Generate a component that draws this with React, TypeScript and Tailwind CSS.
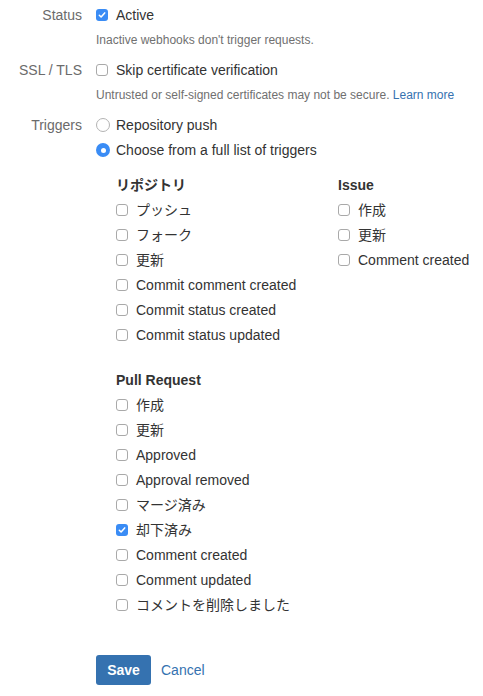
import React from "react";

type Item = { label: string; checked?: boolean };

const repoItems: Item[] = [
  { label: "プッシュ" },
  { label: "フォーク" },
  { label: "更新" },
  { label: "Commit comment created" },
  { label: "Commit status created" },
  { label: "Commit status updated" },
];

const issueItems: Item[] = [
  { label: "作成" },
  { label: "更新" },
  { label: "Comment created" },
];

const prItems: Item[] = [
  { label: "作成" },
  { label: "更新" },
  { label: "Approved" },
  { label: "Approval removed" },
  { label: "マージ済み" },
  { label: "却下済み", checked: true },
  { label: "Comment created" },
  { label: "Comment updated" },
  { label: "コメントを削除しました" },
];

const Checkbox: React.FC<{ checked?: boolean }> = ({ checked }) =>
  checked ? (
    <span className="flex h-3 w-3 shrink-0 items-center justify-center rounded-[3px] bg-[#3a8cf5]">
      <svg width="8" height="8" viewBox="0 0 8 8" fill="none">
        <path d="M1.3 4.2 3.1 6 6.7 1.9" stroke="white" strokeWidth="1.5" strokeLinecap="round" strokeLinejoin="round" />
      </svg>
    </span>
  ) : (
    <span className="h-3 w-3 shrink-0 rounded-[3px] border border-[#a9a9a9] bg-white" />
  );

const Radio: React.FC<{ checked?: boolean }> = ({ checked }) =>
  checked ? (
    <span className="flex h-[14px] w-[14px] shrink-0 items-center justify-center rounded-full bg-[#3a8cf5]">
      <span className="h-[5px] w-[5px] rounded-full bg-white" />
    </span>
  ) : (
    <span className="h-[14px] w-[14px] shrink-0 rounded-full border border-[#b3b3b3] bg-white" />
  );

const CheckRow: React.FC<Item> = ({ label, checked }) => (
  <div className="flex h-5 items-center">
    <Checkbox checked={checked} />
    <span className="ml-2 leading-5">{label}</span>
  </div>
);

const Group: React.FC<{ title: string; items: Item[]; className?: string }> = ({ title, items, className }) => (
  <div className={className}>
    <h3 className="h-5 font-bold leading-5">{title}</h3>
    <div className="mt-[5px] flex flex-col gap-[5px]">
      {items.map((it, i) => (
        <CheckRow key={i} {...it} />
      ))}
    </div>
  </div>
);

const Label: React.FC<{ children: React.ReactNode }> = ({ children }) => (
  <div className="h-5 w-[82px] shrink-0 text-right leading-5 text-[#6b6b6b]">{children}</div>
);

export default function App() {
  return (
    <div className="min-h-[696px] bg-white pt-[5px] font-['Liberation_Sans','Noto_Sans_CJK_JP',Arial,sans-serif] text-[14px] text-[#333]">
      {/* Status */}
      <div className="flex">
        <Label>Status</Label>
        <div className="ml-[14px]">
          <CheckRow label="Active" checked />
          <p className="mt-[5px] h-5 text-[12px] leading-5 text-[#707070]">
            Inactive webhooks don't trigger requests.
          </p>
        </div>
      </div>

      {/* SSL */}
      <div className="mt-[10px] flex">
        <Label>SSL / TLS</Label>
        <div className="ml-[14px]">
          <CheckRow label="Skip certificate verification" />
          <p className="mt-[5px] h-5 text-[12px] leading-5 text-[#707070]">
            Untrusted or self-signed certificates may not be secure.{" "}
            <a className="text-[#3572b0]">Learn more</a>
          </p>
        </div>
      </div>

      {/* Triggers */}
      <div className="mt-[10px] flex">
        <Label>Triggers</Label>
        <div className="ml-[14px]">
          <div className="flex flex-col gap-[5px]">
            <div className="flex h-5 items-center">
              <Radio />
              <span className="ml-[6px] leading-5">Repository push</span>
            </div>
            <div className="flex h-5 items-center">
              <Radio checked />
              <span className="ml-[6px] leading-5">Choose from a full list of triggers</span>
            </div>
          </div>

          <div className="mt-[15px] pl-5">
            <div className="flex">
              <Group title="リポジトリ" items={repoItems} className="w-[222px]" />
              <Group title="Issue" items={issueItems} />
            </div>
            <Group title="Pull Request" items={prItems} className="mt-[25px]" />
          </div>

          <div className="mt-10 flex items-center">
            <button className="h-[30px] w-[55px] rounded-[3px] bg-[#3572b0] font-bold text-white">Save</button>
            <a className="ml-[10px] text-[#3572b0]">Cancel</a>
          </div>
        </div>
      </div>
    </div>
  );
}
